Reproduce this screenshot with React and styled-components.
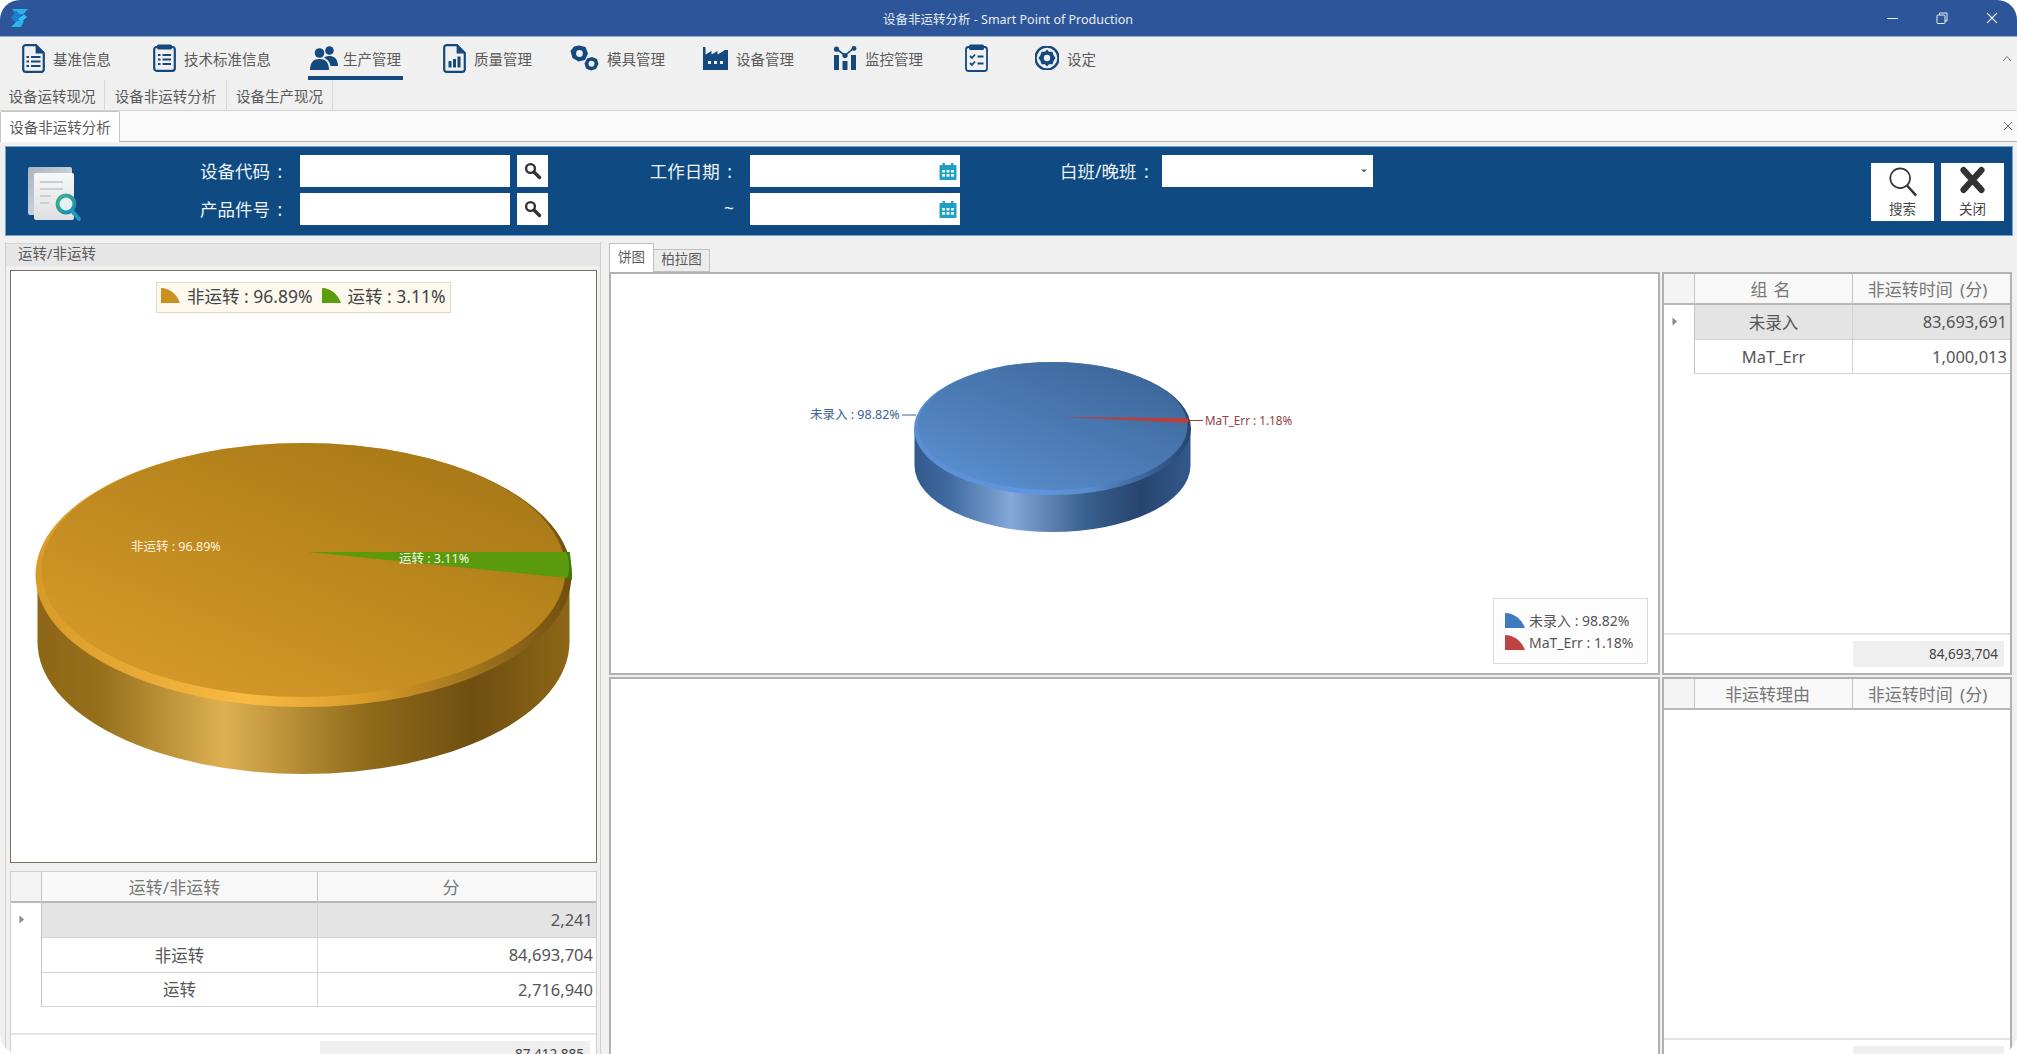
import React from "react";
import styled, { createGlobalStyle } from "styled-components";

const NAVY = "#14497f";

const GlobalStyle = createGlobalStyle`
  html, body {
    margin: 0;
    background: #fff;
  }
  * {
    box-sizing: border-box;
  }
  body {
    font-family: "Noto Sans", "Noto Sans CJK SC", sans-serif;
    color: #555;
  }
`;

const Frame = styled.div`
  width: 2017px;
  height: 1054px;
  border-radius: 20px;
  overflow: hidden;
  background: #f0f0f0;
  display: flex;
  flex-direction: column;
`;

const TitleBar = styled.div`
  height: 37px;
  flex: none;
  background: #2c5699;
  border-bottom: 1px solid #8fb0d2;
  display: flex;
  align-items: center;
  color: #e8edf5;
`;

const TitleSide = styled.div`
  flex: 1;
  display: flex;
  align-items: center;
  justify-content: ${(p) => (p.$end ? "flex-end" : "flex-start")};
  padding-left: ${(p) => (p.$end ? 0 : 10)}px;
`;

const TitleText = styled.div`
  font-size: 12.5px;
  padding-right: 11px;
  white-space: nowrap;
`;

const WinButton = styled.div`
  width: 50px;
  height: 36px;
  display: flex;
  align-items: center;
  justify-content: center;
`;

const MenuBar = styled.div`
  height: 43px;
  flex: none;
  display: flex;
  padding-left: 22px;
  position: relative;
`;

const MenuItem = styled.div`
  width: ${(p) => p.$width}px;
  height: 42px;
  flex: none;
  display: flex;
  align-items: center;
  gap: 8px;
  font-size: 14.5px;
  color: #5a5a5a;
  white-space: nowrap;
`;

const ActiveItem = styled.div`
  align-self: flex-start;
  display: flex;
  align-items: center;
  gap: 5px;
  height: 43px;
  width: 95px;
  padding: 3px 0 0 2px;
  border-bottom: 4px solid ${NAVY};
`;

const Chevron = styled.div`
  position: absolute;
  right: 5px;
  top: 8px;
`;

const SubTabs = styled.div`
  height: 31px;
  flex: none;
  display: flex;
  border-bottom: 1px solid #d2d2d2;
`;

const SubTab = styled.div`
  width: ${(p) => p.$width}px;
  border-right: 1px solid #d8d8d8;
  display: flex;
  align-items: center;
  justify-content: center;
  font-size: 14.5px;
  color: #5a5a5a;
`;

const DocTabs = styled.div`
  height: 31px;
  flex: none;
  background: #fafafa;
  border-bottom: 1px solid #b4b4b4;
  display: flex;
  justify-content: space-between;
  align-items: flex-end;
  padding-right: 4px;
`;

const DocTab = styled.div`
  width: 120px;
  height: 31px;
  margin-bottom: -1px;
  background: #fff;
  border: 1px solid #c4c4c4;
  border-bottom: none;
  border-radius: 2px 2px 0 0;
  display: flex;
  align-items: center;
  justify-content: center;
  padding-bottom: 1px;
  font-size: 14.5px;
  color: #5a5a5a;
`;

const DocClose = styled.div`
  align-self: center;
  display: flex;
`;

const SearchPanel = styled.div`
  height: 90px;
  flex: none;
  margin: 4px 4px 0 5px;
  padding-top: 8px;
  background: #0f4a83;
  border: 1px solid #6fa5d4;
  display: flex;
  align-items: flex-start;
`;

const PanelIcon = styled.div`
  width: 194px;
  flex: none;
  padding: 10px 0 0 20px;
`;

const FieldColumn = styled.div`
  display: flex;
  flex-direction: column;
  gap: 6px;
  margin-left: ${(p) => p.$left || 0}px;
`;

const FieldRow = styled.div`
  height: 32px;
  display: flex;
  align-items: center;
`;

const FieldLabel = styled.div`
  width: ${(p) => p.$width}px;
  margin-right: 16px;
  padding: 0 ${(p) => p.$pad ?? 2}px 2px 0;
  text-align: right;
  color: #eef3f8;
  font-size: 17.5px;
  word-spacing: 3px;
  white-space: pre;
`;

const Input = styled.div`
  width: ${(p) => p.$width}px;
  height: 32px;
  background: #fff;
  display: flex;
  align-items: center;
  justify-content: flex-end;
  padding-right: ${(p) => p.$pad || 4}px;
`;

const LookupButton = styled.div`
  width: 31px;
  height: 32px;
  margin-left: 7px;
  background: #fff;
  display: flex;
  align-items: center;
  justify-content: center;
`;

const ActionBar = styled.div`
  margin-left: auto;
  margin-right: 8px;
  margin-top: 8px;
  display: flex;
  gap: 7px;
`;

const ActionButton = styled.div`
  width: 63px;
  height: 58px;
  background: #fff;
  display: flex;
  flex-direction: column;
  align-items: center;
  justify-content: space-between;
  padding: 3px 0 3px;
  font-size: 13.5px;
  color: #444;
`;

const Main = styled.div`
  flex: 1;
  min-height: 0;
  display: flex;
  padding: 6px 0 0 5px;
`;

const LeftColumn = styled.div`
  width: 596px;
  flex: none;
  display: flex;
  flex-direction: column;
  border-left: 1px solid #cfcfcf;
  border-right: 1px solid #cfcfcf;
  padding: 0 3px 0 4px;
`;

const GroupHeader = styled.div`
  height: 23px;
  flex: none;
  margin: 1px -3px 4px -4px;
  padding-left: 12px;
  background: #e6e6e6;
  border-top: 1px solid #d6d6d6;
  font-size: 14.5px;
  line-height: 18px;
  color: #5a5a5a;
`;

const ChartBox = styled.div`
  width: 587px;
  height: 593px;
  flex: none;
  position: relative;
  background: #fff;
  border: 1px solid #7d6e62;
`;

const ChartSvg = styled.svg`
  display: block;
  width: 100%;
  height: 100%;
`;

const TopLegend = styled.div`
  position: absolute;
  left: 145px;
  top: 11px;
  width: 295px;
  height: 31px;
  background: #fdf9ee;
  border: 1px solid #e2dbc0;
  display: flex;
  align-items: center;
  padding: 0 0 4px 4px;
  font-size: 17.5px;
  color: #444;
  white-space: nowrap;
`;

const LegendEntry = styled.span`
  display: inline-flex;
  align-items: center;
  gap: ${(p) => p.$gap || 7}px;
  margin-right: 9px;
  white-space: nowrap;
`;

const SideLegend = styled.div`
  position: absolute;
  right: 10px;
  bottom: 9px;
  width: 155px;
  height: 66px;
  background: #fdfdfd;
  border: 1px solid #dcdcdc;
  padding: 11px 0 0 11px;
  display: flex;
  flex-direction: column;
  gap: 3px;
  font-size: 14px;
  color: #555;
`;

const GridTable = styled.div`
  flex: none;
  background: #fff;
`;

const LeftTable = styled(GridTable)`
  width: 587px;
  margin-top: 8px;
  height: 200px;
  border: 1px solid #cfcfcf;
  border-bottom: none;
  display: flex;
  flex-direction: column;
`;

const GridRow = styled.div`
  display: grid;
  grid-template-columns: ${(p) => p.$cols};
  height: ${(p) => p.$height}px;
`;

const HeadCell = styled.div`
  background: #f8f8f8;
  border-bottom: 2px solid #b8b8b8;
  border-right: 1px solid #c4c4c4;
  display: flex;
  align-items: center;
  justify-content: center;
  padding: 0 ${(p) => p.$shift || 0}px 1px 0;
  font-size: 17px;
  word-spacing: 3px;
  letter-spacing: ${(p) => p.$spread || 0}px;
  color: #777;
  white-space: nowrap;
  &:first-child {
    background: #f4f4f4;
  }
  &:last-child {
    border-right: none;
  }
`;

const RowMarker = styled.div`
  border-right: 1px solid #c4c4c4;
  padding-left: 8px;
  padding-top: 4px;
  background: #fff;
`;

const Cell = styled.div`
  background: ${(p) => (p.$selected ? "#e4e4e4" : "#fff")};
  border-bottom: 1px solid #d4d4d4;
  border-right: 1px solid #d4d4d4;
  display: flex;
  align-items: center;
  justify-content: ${(p) => (p.$right ? "flex-end" : "center")};
  padding: 0 ${(p) => (p.$right ? "3px" : 0)} 1px 0;
  font-size: 16.5px;
  color: #555;
  &:last-child {
    border-right: none;
  }
`;

const GridFooter = styled.div`
  margin-top: auto;
  height: ${(p) => p.$height || 40}px;
  flex: none;
  border-top: 2px solid #e4e4e4;
  padding: 6px ${(p) => p.$right}px 0 0;
  display: flex;
  justify-content: flex-end;
`;

const FooterValue = styled.div`
  width: ${(p) => p.$width}px;
  height: 26px;
  background: #efefef;
  text-align: right;
  padding-right: 6px;
  font-size: 13.5px;
  line-height: 26px;
  color: #444;
`;

const RightColumn = styled.div`
  flex: 1;
  min-width: 0;
  display: flex;
  flex-direction: column;
  margin-left: 8px;
`;

const ChartTabs = styled.div`
  height: 30px;
  flex: none;
  display: flex;
  align-items: flex-end;
`;

const ChartTab = styled.div`
  height: ${(p) => (p.$active ? 30 : 23)}px;
  width: ${(p) => (p.$active ? 45 : 56)}px;
  margin-bottom: ${(p) => (p.$active ? "-1px" : 0)};
  padding-bottom: ${(p) => (p.$active ? 6 : 5)}px;
  position: relative;
  background: ${(p) => (p.$active ? "#fff" : "#ececec")};
  border: 1px solid #c0c0c0;
  border-bottom: ${(p) => (p.$active ? "none" : "1px solid #c0c0c0")};
  border-left: ${(p) => (p.$active ? "1px solid #c0c0c0" : "none")};
  display: flex;
  align-items: center;
  justify-content: center;
  font-size: 13.5px;
  color: #5a5a5a;
`;

const PaneRows = styled.div`
  display: flex;
  flex-direction: column;
  gap: 2px;
`;

const PaneRow = styled.div`
  display: flex;
  gap: 2px;
  height: ${(p) => p.$height}px;
  flex: none;
`;

const ChartPane = styled.div`
  width: 1051px;
  flex: none;
  position: relative;
  background: #fff;
  border: 2px solid #b2b2b2;
`;

const SidePane = styled.div`
  width: 350px;
  flex: none;
  background: #fff;
  border: 2px solid #b2b2b2;
  display: flex;
  flex-direction: column;
`;

const Marker = () => (
  <svg width="6" height="9" viewBox="0 0 6 9">
    <path d="M0.5 0.5 L5 4.5 L0.5 8.5 Z" fill="#888" />
  </svg>
);

const iconProps = { fill: "none", stroke: NAVY, strokeWidth: 2.2 };

const DocIcon = ({ bars }) => (
  <svg width="23" height="29" viewBox="0 0 23 29">
    <path d="M3 1.2 H14 L21.8 9 V25.5 a2.3 2.3 0 0 1 -2.3 2.3 H3.5 a2.3 2.3 0 0 1 -2.3 -2.3 V3.5 a2.3 2.3 0 0 1 1.8 -2.3 Z" {...iconProps} />
    <path d="M13.6 1.2 V9.4 H21.8 Z" fill={NAVY} />
    {bars ? (
      <path d="M5.5 23.5 V17 H8.5 V23.5 Z M10 23.5 V15 H13 V23.5 Z M14.5 23.5 V12.5 H17.5 V23.5 Z" fill={NAVY} />
    ) : (
      <path d="M4.5 13 H7 M9 13 H18.5 M4.5 17.5 H7 M9 17.5 H18.5 M4.5 22 H7 M9 22 H18.5" {...iconProps} />
    )}
  </svg>
);

const ClipIcon = () => (
  <svg width="23" height="28" viewBox="0 0 23 28">
    <rect x="1.2" y="3" width="20.6" height="23.8" rx="2.5" {...iconProps} />
    <rect x="4" y="0.5" width="15" height="5" rx="1.5" fill={NAVY} />
    <path d="M5 11 H7.5 M9.5 11 H18 M5 15.5 H7.5 M9.5 15.5 H18 M5 20 H7.5 M9.5 20 H18" {...iconProps} />
  </svg>
);

const PeopleIcon = () => (
  <svg width="28" height="24" viewBox="0 0 28 24">
    <circle cx="9.5" cy="7" r="4.8" fill={NAVY} />
    <circle cx="19.5" cy="4.5" r="4.3" fill={NAVY} />
    <path d="M0 24 C0 16 4 13 9.5 13 C15 13 19 16 19 24 Z" fill={NAVY} />
    <path d="M14 11.5 C16 10 18 10 20 10 C24.5 10 28 13.5 28 20 H20.5 C20 16.5 18 13.5 14 11.5 Z" fill={NAVY} />
  </svg>
);

const NutIcon = () => (
  <svg width="29" height="26" viewBox="0 0 29 26">
    <path d="M9 0.5 L15.5 2 L18 8.5 L15 15 L8.5 16.5 L2.5 13 L0.5 6 L4 1.5 Z" fill={NAVY} />
    <circle cx="9.5" cy="8.5" r="3.4" fill="#f0f0f0" />
    <path d="M22 12 L27 14 L28.5 19 L26 24 L21 25.5 L16 23.5 L14.5 18.5 L17 13.5 Z" fill={NAVY} />
    <circle cx="21.5" cy="18.8" r="3" fill="#f0f0f0" />
  </svg>
);

const FactoryIcon = () => (
  <svg width="25" height="23" viewBox="0 0 25 23">
    <path d="M0 0 H2.5 V7.5 L8.5 4 V7.5 L14.5 4 V7.5 L20.5 4 L21.5 3 H25 V23 H0 Z" fill={NAVY} />
    <path d="M5 14 H8 V17 H5 Z M11 14 H14 V17 H11 Z M17 14 H20 V17 H17 Z" fill="#f0f0f0" />
  </svg>
);

const MonitorIcon = () => (
  <svg width="24" height="24" viewBox="0 0 24 24">
    <path d="M1 9 V24 H6 V9 Z M9.5 15 V24 H14.5 V15 Z M18 9 V24 H23 V9 Z" fill={NAVY} />
    <path d="M3.5 3 L12 9.5 L21 1.8" fill="none" stroke={NAVY} strokeWidth="1.6" />
    <circle cx="3.5" cy="3.2" r="2.6" fill={NAVY} />
    <circle cx="12" cy="9.5" r="2.6" fill={NAVY} />
    <circle cx="21" cy="2.4" r="2.4" fill={NAVY} />
  </svg>
);

const CheckClipIcon = () => (
  <svg width="23" height="28" viewBox="0 0 23 28">
    <rect x="1" y="3" width="21" height="24" rx="2.5" fill="none" stroke={NAVY} strokeWidth="1.8" />
    <rect x="4" y="0.5" width="15" height="5.5" rx="1.5" fill={NAVY} />
    <path d="M5 12 L7 14 L10 10.5 M5 19 L7 21 L10 17.5 M12.5 12.5 H18.5 M12.5 19.5 H18.5" fill="none" stroke={NAVY} strokeWidth="1.8" />
  </svg>
);

const GearIcon = () => (
  <svg width="24" height="24" viewBox="0 0 24 24">
    <path d="M12 0.5 A11.5 11.5 0 0 1 12 23.5 A11.5 11.5 0 0 1 12 0.5 Z" fill="none" stroke={NAVY} strokeWidth="2.4" />
    <path d="M12 3.5 L14 5.8 H17.5 L18.5 9 L20.5 12 L18.5 15 L17.5 18.2 H14 L12 20.5 L10 18.2 H6.5 L5.5 15 L3.5 12 L5.5 9 L6.5 5.8 H10 Z" fill={NAVY} />
    <circle cx="12" cy="12" r="3.2" fill="#f0f0f0" />
  </svg>
);

const Logo = () => (
  <svg width="20" height="20" viewBox="0 0 20 20">
    <path d="M2 1 H18 L13 6.5 H7 Z" fill="#2bb2ea" />
    <path d="M6 2 L12.5 9.5 L6 15 L1 10 Z" fill="#1c7fd6" />
    <path d="M8 11 L14 6.5 L17 9 L11 14 Z" fill="#36c2ee" />
    <path d="M1 19 L7 13 H14 L11 19 Z" fill="#2bb2ea" />
  </svg>
);

const Lens = () => (
  <svg width="18" height="18" viewBox="0 0 18 18">
    <circle cx="6.5" cy="6.5" r="4.4" fill="none" stroke="#333" strokeWidth="2.4" />
    <path d="M10 10 L15.5 15.5" stroke="#333" strokeWidth="3.4" strokeLinecap="round" />
  </svg>
);

const CalendarIcon = () => (
  <svg width="18" height="17" viewBox="0 0 18 17">
    <rect x="0.5" y="2" width="17" height="15" rx="1" fill="#1f9fc4" />
    <rect x="3.5" y="0" width="2.4" height="4" fill="#1f9fc4" />
    <rect x="12" y="0" width="2.4" height="4" fill="#1f9fc4" />
    <path d="M3 7 H6 V9.5 H3 Z M7.5 7 H10.5 V9.5 H7.5 Z M12 7 H15 V9.5 H12 Z M3 11 H6 V13.8 H3 Z M7.5 11 H10.5 V13.8 H7.5 Z M12 11 H15 V13.8 H12 Z" fill="#e8f6fa" />
  </svg>
);

const ReportIcon = () => (
  <svg width="60" height="58" viewBox="0 0 60 58">
    <defs>
      <linearGradient id="backPage" x1="0" y1="0" x2="1" y2="1">
        <stop offset="0" stopColor="#a9b5c2" />
        <stop offset="1" stopColor="#e2e5e8" />
      </linearGradient>
      <linearGradient id="frontPage" x1="0" y1="0" x2="0" y2="1">
        <stop offset="0" stopColor="#f8f8f8" />
        <stop offset="1" stopColor="#dcdfe2" />
      </linearGradient>
      <linearGradient id="lensRing" x1="0" y1="0" x2="1" y2="1">
        <stop offset="0" stopColor="#3fb28a" />
        <stop offset="1" stopColor="#1488b8" />
      </linearGradient>
    </defs>
    <rect x="2" y="2" width="44" height="48" rx="2" fill="url(#backPage)" />
    <rect x="8" y="8" width="40" height="47" rx="2" fill="url(#frontPage)" />
    <path d="M14 17 H37 M14 24 H37 M14 31 H25 M14 38 H23" stroke="#c0c4c8" strokeWidth="1.6" />
    <circle cx="40" cy="39" r="8.5" fill="#e4eff2" stroke="url(#lensRing)" strokeWidth="4" />
    <path d="M46 46 L53 54" stroke="#1e9ac0" strokeWidth="4" strokeLinecap="round" />
  </svg>
);

// swatch of the chart legend, a quarter of a pie
const Quarter = ({ color, width = 19, height = 15 }) => (
  <svg width={width} height={height} viewBox="0 0 20 16" preserveAspectRatio="none">
    <path d="M0 0 C9 0 17 7 20 16 H0 Z" fill={color} />
  </svg>
);

const Pie3D = ({ id, cx, rx, sideRx, top, rimBottom, faceBottom, bottom, faceRx, colors }) => {
  const ry = (rimBottom - top) / 2;
  const cy = top + ry;
  const faceRy = (faceBottom - top) / 2;
  const faceCy = top + faceRy;
  return (
    <>
      <defs>
        <linearGradient id={`${id}Side`} x1="0" y1="0" x2="1" y2="0">
          <stop offset="0" stopColor={colors.sideEdge} />
          <stop offset="0.12" stopColor={colors.sideLeft} />
          <stop offset="0.35" stopColor={colors.sideLight} />
          <stop offset="0.62" stopColor={colors.sideMid} />
          <stop offset="0.82" stopColor={colors.sideDark} />
          <stop offset="1" stopColor={colors.sideEdge} />
        </linearGradient>
        <linearGradient id={`${id}Rim`} x1="0" y1="0.7" x2="1" y2="0.7">
          <stop offset="0" stopColor={colors.faceLow} />
          <stop offset="0.4" stopColor={colors.rim} />
          <stop offset="0.62" stopColor={colors.faceLow} />
          <stop offset="1" stopColor={colors.sideDark} />
        </linearGradient>
        <linearGradient id={`${id}Face`} x1="0.1" y1="0.95" x2="0.85" y2="0.05">
          <stop offset="0" stopColor={colors.faceLow} />
          <stop offset="1" stopColor={colors.faceHigh} />
        </linearGradient>
      </defs>
      <path
        d={`M${cx - sideRx} ${cy} V${bottom - ry} A${sideRx} ${ry} 0 0 0 ${cx + sideRx} ${bottom - ry} V${cy} Z`}
        fill={`url(#${id}Side)`}
      />
      <ellipse cx={cx} cy={cy} rx={rx} ry={ry} fill={`url(#${id}Rim)`} />
      <ellipse cx={cx} cy={faceCy} rx={faceRx} ry={faceRy} fill={`url(#${id}Face)`} />
    </>
  );
};

const goldColors = {
  sideEdge: "#8d6616",
  sideLeft: "#97701c",
  sideDark: "#6f4f10",
  sideLight: "#deb052",
  sideMid: "#8f6a1a",
  faceLow: "#d89b29",
  faceHigh: "#a67816",
  rim: "#f9bb42",
};

const blueColors = {
  sideEdge: "#33598c",
  sideLeft: "#3f6a9f",
  sideDark: "#27446f",
  sideLight: "#84a8d8",
  sideMid: "#38608f",
  faceLow: "#5a8fd0",
  faceHigh: "#3c6698",
  rim: "#5f96e2",
};

const leftCols = "31px 276px 1fr";
const sideCols = "31px 158px 1fr";

const App = () => (
  <Frame>
    <GlobalStyle />
    <TitleBar>
      <TitleSide>
        <Logo />
      </TitleSide>
      <TitleText>设备非运转分析 - Smart Point of Production</TitleText>
      <TitleSide $end>
        <WinButton>
          <svg width="11" height="3"><path d="M0 1.5 H11" stroke="#e8edf5" strokeWidth="1" /></svg>
        </WinButton>
        <WinButton>
          <svg width="12" height="12" viewBox="0 0 12 12" fill="none" stroke="#e8edf5">
            <rect x="1" y="3" width="8" height="8.5" rx="1" />
            <path d="M3.5 3 V1 H11 V9 H9" />
          </svg>
        </WinButton>
        <WinButton>
          <svg width="12" height="12" viewBox="0 0 12 12"><path d="M1 1 L11 11 M11 1 L1 11" stroke="#e8edf5" strokeWidth="1.1" /></svg>
        </WinButton>
      </TitleSide>
    </TitleBar>

    <MenuBar>
      <MenuItem $width={131}><DocIcon />基准信息</MenuItem>
      <MenuItem $width={155}><ClipIcon />技术标准信息</MenuItem>
      <MenuItem $width={135}>
        <ActiveItem><PeopleIcon />生产管理</ActiveItem>
      </MenuItem>
      <MenuItem $width={127}><DocIcon bars />质量管理</MenuItem>
      <MenuItem $width={133}><NutIcon />模具管理</MenuItem>
      <MenuItem $width={130}><FactoryIcon />设备管理</MenuItem>
      <MenuItem $width={132}><MonitorIcon />监控管理</MenuItem>
      <MenuItem $width={70}><CheckClipIcon /></MenuItem>
      <MenuItem $width={80}><GearIcon />设定</MenuItem>
      <Chevron>
        <svg width="10" height="7" viewBox="0 0 10 7" fill="none" stroke="#777"><path d="M1 6 L5 1.5 L9 6" /></svg>
      </Chevron>
    </MenuBar>

    <SubTabs>
      <SubTab $width={105}>设备运转现况</SubTab>
      <SubTab $width={122}>设备非运转分析</SubTab>
      <SubTab $width={106}>设备生产现况</SubTab>
    </SubTabs>

    <DocTabs>
      <DocTab>设备非运转分析</DocTab>
      <DocClose>
        <svg width="10" height="10" viewBox="0 0 10 10"><path d="M1 1 L9 9 M9 1 L1 9" stroke="#666" strokeWidth="1" /></svg>
      </DocClose>
    </DocTabs>

    <SearchPanel>
      <PanelIcon><ReportIcon /></PanelIcon>
      <FieldColumn>
        <FieldRow>
          <FieldLabel $width={84}>设备代码 :</FieldLabel>
          <Input $width={210} />
          <LookupButton><Lens /></LookupButton>
        </FieldRow>
        <FieldRow>
          <FieldLabel $width={84}>产品件号 :</FieldLabel>
          <Input $width={210} />
          <LookupButton><Lens /></LookupButton>
        </FieldRow>
      </FieldColumn>
      <FieldColumn $left={93}>
        <FieldRow>
          <FieldLabel $width={93}>工作日期 :</FieldLabel>
          <Input $width={210} $pad={3}><CalendarIcon /></Input>
        </FieldRow>
        <FieldRow>
          <FieldLabel $width={93} $pad={0}>~</FieldLabel>
          <Input $width={210} $pad={3}><CalendarIcon /></Input>
        </FieldRow>
      </FieldColumn>
      <FieldColumn $left={100}>
        <FieldRow>
          <FieldLabel $width={86} $pad={4}>白班/晚班 :</FieldLabel>
          <Input $width={211} $pad={6}>
            <svg width="6" height="4"><path d="M0 0.5 H6 L3 3.5 Z" fill="#666" /></svg>
          </Input>
        </FieldRow>
      </FieldColumn>
      <ActionBar>
        <ActionButton>
          <svg width="34" height="34" viewBox="0 0 34 34" fill="none" stroke="#333">
            <circle cx="14" cy="13" r="10.5" strokeWidth="1.8" />
            <path d="M21.5 21 L31 31.5" strokeWidth="2.6" />
          </svg>
          搜索
        </ActionButton>
        <ActionButton>
          <svg width="25" height="28" viewBox="0 0 28 30">
            <path d="M4 4 L24 26 M24 4 L4 26" stroke="#333" strokeWidth="7" strokeLinecap="round" />
          </svg>
          关闭
        </ActionButton>
      </ActionBar>
    </SearchPanel>

    <Main>
      <LeftColumn>
        <GroupHeader>运转/非运转</GroupHeader>
        <ChartBox>
          <TopLegend>
            <LegendEntry><Quarter color="#cc9020" />非运转 : 96.89%</LegendEntry>
            <LegendEntry><Quarter color="#5a9e0c" />运转 : 3.11%</LegendEntry>
          </TopLegend>
          <ChartSvg viewBox="11 271 585 591">
            <Pie3D id="gold" cx={303.5} rx={268} sideRx={266} top={443} rimBottom={707} faceBottom={697} bottom={774} faceRx={262} colors={goldColors} />
            <path d="M308 552 L570 552 L572 580 L567 578 Z" fill="#5a9a0c" />
            <path d="M565 552 A 4 14 0 0 1 567 578 L572 580 A 30 60 0 0 0 569 552 Z" fill="#3f7a08" />
            <text x="131" y="551" fontSize="12.5" fill="#fbf2dc">非运转 : 96.89%</text>
            <text x="399" y="563" fontSize="12.5" fill="#f4f8e8">运转 : 3.11%</text>
          </ChartSvg>
        </ChartBox>
        <LeftTable>
          <GridRow $cols={leftCols} $height={31}>
            <HeadCell />
            <HeadCell $shift={10}>运转/非运转</HeadCell>
            <HeadCell $shift={12}>分</HeadCell>
          </GridRow>
          <GridRow $cols={leftCols} $height={35}>
            <RowMarker><Marker /></RowMarker>
            <Cell $selected />
            <Cell $selected $right>2,241</Cell>
          </GridRow>
          <GridRow $cols={leftCols} $height={35}>
            <RowMarker />
            <Cell>非运转</Cell>
            <Cell $right>84,693,704</Cell>
          </GridRow>
          <GridRow $cols={leftCols} $height={34}>
            <RowMarker />
            <Cell>运转</Cell>
            <Cell $right>2,716,940</Cell>
          </GridRow>
          <GridFooter $right={6} $height={38}>
            <FooterValue $width={270}>87,412,885</FooterValue>
          </GridFooter>
        </LeftTable>
      </LeftColumn>

      <RightColumn>
        <ChartTabs>
          <ChartTab $active>饼图</ChartTab>
          <ChartTab>柏拉图</ChartTab>
        </ChartTabs>
        <PaneRows>
          <PaneRow $height={403}>
            <ChartPane>
              <ChartSvg viewBox="611 274 1047 399">
                <Pie3D id="blue" cx={1052.5} rx={138.5} sideRx={138} top={362} rimBottom={495} faceBottom={490} bottom={532} faceRx={135} colors={blueColors} />
                <path d="M1062 417 L1188 418 L1188 423 Z" fill="#b5413f" />
                <path d="M902 415 H916" stroke="#3a6494" strokeWidth="1" />
                <path d="M1188 420.5 H1203" stroke="#9c3a3a" strokeWidth="1" />
                <text x="810" y="419" fontSize="12.5" fill="#3a6494">未录入 : 98.82%</text>
                <text x="1205" y="425" fontSize="11.7" fill="#934040">MaT_Err : 1.18%</text>
              </ChartSvg>
              <SideLegend>
                <LegendEntry $gap={4}><Quarter color="#3f79bf" width={20} />未录入 : 98.82%</LegendEntry>
                <LegendEntry $gap={4}><Quarter color="#bf4341" width={20} />MaT_Err : 1.18%</LegendEntry>
              </SideLegend>
            </ChartPane>
            <SidePane>
              <GridRow $cols={sideCols} $height={31}>
                <HeadCell />
                <HeadCell $spread={6}>组名</HeadCell>
                <HeadCell $shift={8}>非运转时间 (分)</HeadCell>
              </GridRow>
              <GridRow $cols={sideCols} $height={35}>
                <RowMarker><Marker /></RowMarker>
                <Cell $selected>未录入</Cell>
                <Cell $selected $right>83,693,691</Cell>
              </GridRow>
              <GridRow $cols={sideCols} $height={34}>
                <RowMarker />
                <Cell>MaT_Err</Cell>
                <Cell $right>1,000,013</Cell>
              </GridRow>
              <GridFooter $right={6}>
                <FooterValue $width={151}>84,693,704</FooterValue>
              </GridFooter>
            </SidePane>
          </PaneRow>
          <PaneRow $height={403}>
            <ChartPane />
            <SidePane>
              <GridRow $cols={sideCols} $height={31}>
                <HeadCell />
                <HeadCell $shift={12}>非运转理由</HeadCell>
                <HeadCell $shift={8}>非运转时间 (分)</HeadCell>
              </GridRow>
              <GridFooter $right={6}>
                <FooterValue $width={151}>0</FooterValue>
              </GridFooter>
            </SidePane>
          </PaneRow>
        </PaneRows>
      </RightColumn>
    </Main>
  </Frame>
);

export default App;
